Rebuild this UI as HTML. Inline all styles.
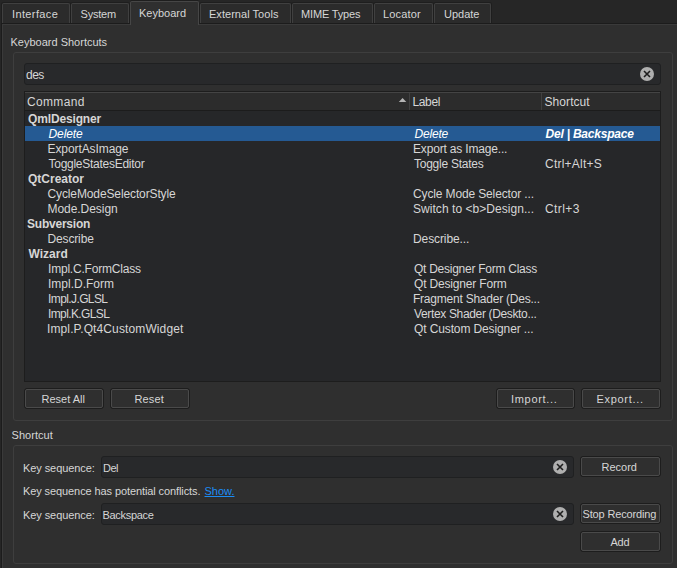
<!DOCTYPE html>
<html><head><meta charset="utf-8">
<style>
*{margin:0;padding:0;box-sizing:border-box}
html,body{width:677px;height:568px;overflow:hidden;background:#262626}
body{position:relative;font-family:"Liberation Sans",sans-serif;font-size:11px;color:#d6d6d6}
.a{position:absolute}
.t{position:absolute;white-space:nowrap;line-height:15px;z-index:10}
.tab{position:absolute;top:3px;height:21px;background:#2b2b2b;border:1px solid #404040;box-shadow:0 0 0 1px #1e1e1e;border-bottom:none;border-radius:2px 2px 0 0}
.tab.sel{top:1px;height:24px;background:#2f2f2f;border-color:#464646;z-index:3;box-shadow:0 -1px 0 0 #1e1e1e}
.pane{position:absolute;left:1px;top:23px;width:676px;height:545px;background:#2f2f2f;border-top:1px solid #1c1c1c;border-left:1px solid #1c1c1c}
.pane-in{position:absolute;left:2px;top:24px;width:675px;height:544px;border-top:1px solid #3a3a3a;border-left:1px solid #3a3a3a}
.grp{position:absolute;border:1px solid #3e3e3e;border-radius:3px}
.edit{position:absolute;background:#28292b;border:1px solid #1f2021;border-radius:3px}
.btn{position:absolute;height:21px;border:1px solid #1d1d1d;border-radius:3px;background:#1d1d1d}
.btn i{position:absolute;left:0;top:0;right:0;bottom:0;border:1px solid #4a4a4a;border-radius:2px;background:#2f2f2f}
.clr{position:absolute;width:14px;height:14px;border-radius:50%;background:#afafaf}
.clr svg{position:absolute;left:0;top:0}
.tree{position:absolute;left:24px;top:91px;width:637px;height:291px;background:#262729;border:1px solid #1d1d1d}
.hdr{position:absolute;left:0;top:0;width:635px;height:19px;background:#2c2c2c;border-top:1px solid #444;border-bottom:1px solid #1c1c1c}
.selrow{position:absolute;left:25px;top:126px;width:635px;height:15px;background:#255a93}
.w{color:#fff}
</style></head><body>
<div class="tab" style="left:2px;width:68px"></div>
<div class="tab" style="left:71px;width:58px"></div>
<div class="tab" style="left:200px;width:91px"></div>
<div class="tab" style="left:292px;width:81px"></div>
<div class="tab" style="left:374px;width:59px"></div>
<div class="tab" style="left:434px;width:57px"></div>
<div class="pane"></div>
<div class="pane-in"></div>
<div class="tab sel" style="left:130px;width:69px"></div>
<div class="grp" style="left:13px;top:52px;width:660px;height:369px"></div>
<div class="edit" style="left:24px;top:63px;width:637px;height:22px"></div>
<div class="clr" style="left:640px;top:67px"><svg width="14" height="14"><path d="M4 4L10 10M10 4L4 10" stroke="#1e1e1e" stroke-width="1.6"/></svg></div>
<div class="tree">
  <div class="hdr">
    <svg class="a" style="left:373px;top:4px" width="9" height="6"><path d="M0.8 5.1L4.55 1.1L8.3 5.1Z" fill="#b4b4b4"/></svg>
    <div class="a" style="left:384px;top:0px;width:1px;height:17px;background:#404040"></div>
    <div class="a" style="left:516px;top:0px;width:1px;height:17px;background:#404040"></div>
  </div>
</div>
<div class="selrow"></div>
<div class="btn" style="left:24px;top:388px;width:80px"><i></i></div>
<div class="btn" style="left:110px;top:388px;width:80px"><i></i></div>
<div class="btn" style="left:496px;top:388px;width:79px"><i></i></div>
<div class="btn" style="left:581px;top:388px;width:80px"><i></i></div>
<div class="grp" style="left:13px;top:445px;width:660px;height:119px"></div>
<div class="edit" style="left:101px;top:456px;width:473px;height:22px"></div>
<div class="clr" style="left:553px;top:460px"><svg width="14" height="14"><path d="M4 4L10 10M10 4L4 10" stroke="#1e1e1e" stroke-width="1.6"/></svg></div>
<div class="btn" style="left:580px;top:456px;width:81px"><i></i></div>
<div class="edit" style="left:101px;top:503px;width:473px;height:22px"></div>
<div class="clr" style="left:553px;top:507px"><svg width="14" height="14"><path d="M4 4L10 10M10 4L4 10" stroke="#1e1e1e" stroke-width="1.6"/></svg></div>
<div class="btn" style="left:580px;top:503px;width:81px"><i></i></div>
<div class="btn" style="left:580px;top:531px;width:81px"><i></i></div>

<div class="t" id="tab_interface" style="left:12.00px;top:7px;font-size:11px;letter-spacing:0.375px;">Interface</div>
<div class="t" id="tab_system" style="left:80.50px;top:7px;font-size:11px;letter-spacing:-0.200px;">System</div>
<div class="t" id="tab_keyboard" style="left:139.00px;top:6px;font-size:11px;">Keyboard</div>
<div class="t" id="tab_ext" style="left:209.00px;top:7px;font-size:11px;letter-spacing:0.038px;">External Tools</div>
<div class="t" id="tab_mime" style="left:301.00px;top:7px;font-size:11px;letter-spacing:-0.167px;">MIME Types</div>
<div class="t" id="tab_locator" style="left:383.00px;top:7px;font-size:11px;letter-spacing:0.167px;">Locator</div>
<div class="t" id="tab_update" style="left:444.00px;top:7px;font-size:11px;">Update</div>
<div class="t" id="ttl_ks" style="left:10.50px;top:35px;font-size:11px;letter-spacing:-0.000px;">Keyboard Shortcuts</div>
<div class="t" id="ttl_sc" style="left:11.60px;top:428px;font-size:11px;letter-spacing:0.029px;">Shortcut</div>
<div class="t" id="des" style="left:26.00px;top:68px;font-size:12px;letter-spacing:-0.500px;">des</div>
<div class="t" id="h_cmd" style="left:27.00px;top:95px;font-size:12px;letter-spacing:0.333px;">Command</div>
<div class="t" id="h_lbl" style="left:412.50px;top:95px;font-size:12px;letter-spacing:-0.375px;">Label</div>
<div class="t" id="h_sc" style="left:544.50px;top:95px;font-size:12px;letter-spacing:0.071px;">Shortcut</div>
<div class="t" id="r0_c" style="left:28.00px;top:112px;font-size:12px;font-weight:bold;letter-spacing:-0.150px;">QmlDesigner</div>
<div class="t w" id="r1_c" style="left:48.50px;top:127px;font-size:12px;font-style:italic;letter-spacing:-0.100px;">Delete</div>
<div class="t w" id="r1_l" style="left:414.50px;top:127px;font-size:12px;font-style:italic;letter-spacing:-0.200px;">Delete</div>
<div class="t w" id="r1_s" style="left:545.50px;top:127px;font-size:12px;font-weight:bold;font-style:italic;letter-spacing:-0.214px;">Del | Backspace</div>
<div class="t" id="r2_c" style="left:47.50px;top:142px;font-size:12px;letter-spacing:-0.083px;">ExportAsImage</div>
<div class="t" id="r2_l" style="left:413.00px;top:142px;font-size:12px;letter-spacing:-0.176px;">Export as Image...</div>
<div class="t" id="r3_c" style="left:48.50px;top:157px;font-size:12px;letter-spacing:-0.265px;">ToggleStatesEditor</div>
<div class="t" id="r3_l" style="left:414.00px;top:157px;font-size:12px;letter-spacing:-0.250px;">Toggle States</div>
<div class="t" id="r3_s" style="left:545.00px;top:157px;font-size:12px;letter-spacing:0.222px;">Ctrl+Alt+S</div>
<div class="t" id="r4_c" style="left:28.00px;top:172px;font-size:12px;font-weight:bold;letter-spacing:-0.000px;">QtCreator</div>
<div class="t" id="r5_c" style="left:47.50px;top:187px;font-size:12px;letter-spacing:-0.119px;">CycleModeSelectorStyle</div>
<div class="t" id="r5_l" style="left:413.00px;top:187px;font-size:12px;letter-spacing:-0.136px;">Cycle Mode Selector ...</div>
<div class="t" id="r6_c" style="left:47.50px;top:202px;font-size:12px;letter-spacing:-0.050px;">Mode.Design</div>
<div class="t" id="r6_l" style="left:413.00px;top:202px;font-size:12px;letter-spacing:0.048px;">Switch to &lt;b&gt;Design...</div>
<div class="t" id="r6_s" style="left:545.00px;top:202px;font-size:12px;letter-spacing:0.400px;">Ctrl+3</div>
<div class="t" id="r7_c" style="left:27.00px;top:217px;font-size:12px;font-weight:bold;letter-spacing:-0.222px;">Subversion</div>
<div class="t" id="r8_c" style="left:47.50px;top:232px;font-size:12px;letter-spacing:-0.143px;">Describe</div>
<div class="t" id="r8_l" style="left:413.00px;top:232px;font-size:12px;letter-spacing:-0.100px;">Describe...</div>
<div class="t" id="r9_c" style="left:28.50px;top:247px;font-size:12px;font-weight:bold;letter-spacing:0.000px;">Wizard</div>
<div class="t" id="r10_c" style="left:48.00px;top:262px;font-size:12px;letter-spacing:-0.200px;">Impl.C.FormClass</div>
<div class="t" id="r10_l" style="left:414.00px;top:262px;font-size:12px;letter-spacing:-0.262px;">Qt Designer Form Class</div>
<div class="t" id="r11_c" style="left:48.00px;top:277px;font-size:12px;letter-spacing:0.000px;">Impl.D.Form</div>
<div class="t" id="r11_l" style="left:414.00px;top:277px;font-size:12px;letter-spacing:-0.167px;">Qt Designer Form</div>
<div class="t" id="r12_c" style="left:48.00px;top:292px;font-size:12px;letter-spacing:-0.600px;">Impl.J.GLSL</div>
<div class="t" id="r12_l" style="left:413.00px;top:292px;font-size:12px;letter-spacing:-0.227px;">Fragment Shader (Des...</div>
<div class="t" id="r13_c" style="left:48.00px;top:307px;font-size:12px;letter-spacing:-0.610px;">Impl.K.GLSL</div>
<div class="t" id="r13_l" style="left:414.00px;top:307px;font-size:12px;letter-spacing:-0.348px;">Vertex Shader (Deskto...</div>
<div class="t" id="r14_c" style="left:47.00px;top:322px;font-size:12px;letter-spacing:0.119px;">Impl.P.Qt4CustomWidget</div>
<div class="t" id="r14_l" style="left:414.00px;top:322px;font-size:12px;letter-spacing:-0.119px;">Qt Custom Designer ...</div>
<div class="t" id="b_resetall" style="left:41.50px;top:392px;font-size:11px;">Reset All</div>
<div class="t" id="b_reset" style="left:134.50px;top:392px;font-size:11px;letter-spacing:0.125px;">Reset</div>
<div class="t" id="b_import" style="left:511.00px;top:392px;font-size:11px;letter-spacing:0.688px;">Import...</div>
<div class="t" id="b_export" style="left:596.50px;top:392px;font-size:11px;letter-spacing:0.687px;">Export...</div>
<div class="t" id="b_record" style="left:601.50px;top:460px;font-size:11px;">Record</div>
<div class="t" id="b_stop" style="left:582.50px;top:507px;font-size:11px;letter-spacing:-0.154px;">Stop Recording</div>
<div class="t" id="b_add" style="left:610.50px;top:535px;font-size:11px;letter-spacing:-0.250px;">Add</div>
<div class="t" id="ks1" style="left:23.00px;top:461px;font-size:11px;letter-spacing:-0.083px;">Key sequence:</div>
<div class="t" id="del" style="left:103.00px;top:461px;font-size:11px;letter-spacing:-0.500px;">Del</div>
<div class="t" id="conf" style="left:23.00px;top:484px;font-size:11px;letter-spacing:-0.097px;">Key sequence has potential conflicts.</div>
<div class="t" id="show" style="left:204.50px;top:484px;font-size:11px;color:#1c8cf5;text-decoration:underline;">Show.</div>
<div class="t" id="ks2" style="left:23.00px;top:508px;font-size:11px;letter-spacing:-0.083px;">Key sequence:</div>
<div class="t" id="bksp" style="left:102.50px;top:508px;font-size:11px;letter-spacing:-0.312px;">Backspace</div>
</body></html>
